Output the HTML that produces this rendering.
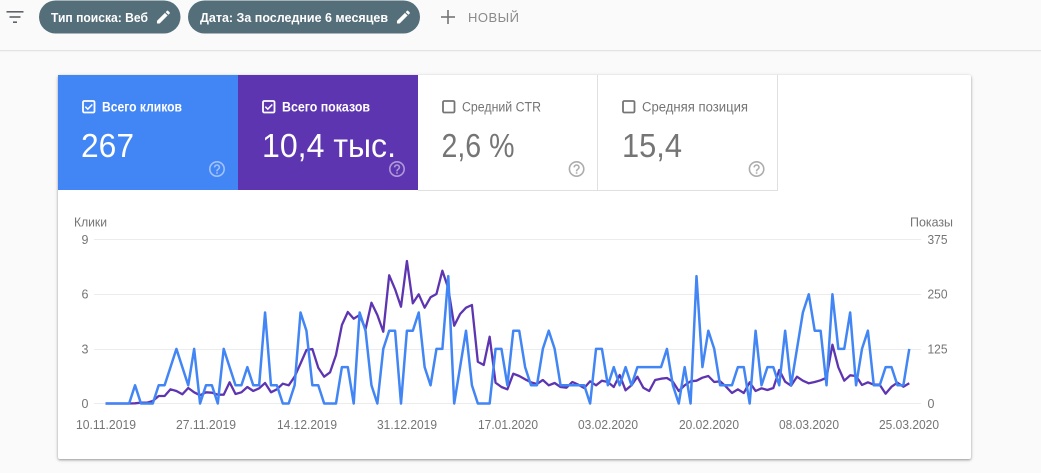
<!DOCTYPE html>
<html lang="ru"><head><meta charset="utf-8"><title>Search Console</title>
<style>
html,body{margin:0;padding:0;width:1041px;height:473px;overflow:hidden;background:#fafafa}
#bar{position:absolute;left:0;top:0;width:1041px;height:50px;border-bottom:1px solid #e3e3e3;box-sizing:content-box;box-shadow:0 1px 1px rgba(0,0,0,.03)}
#card{position:absolute;left:58px;top:75px;width:913px;height:384px;background:#fff;border-radius:2px;box-shadow:0 1px 2px rgba(0,0,0,.3),0 1px 4px rgba(0,0,0,.15)}
svg{position:absolute;left:0;top:0}
text{font-family:"Liberation Sans",sans-serif}
.ax{font-size:12.5px;fill:#757575}
.lb{font-size:13.5px;font-weight:bold;fill:#fff}
.lg{font-size:13.5px;fill:#757575}
.n{font-size:33px;fill:#fff}
.ng{font-size:33px;fill:#757575}
.c{font-size:13px;font-weight:bold;fill:#fff}
.g{stroke:#ececec;stroke-width:1}
</style></head><body>
<div id="bar"></div>
<div id="card"></div>
<svg width="1041" height="473" viewBox="0 0 1041 473" xmlns="http://www.w3.org/2000/svg">
<!-- filter -->
<g fill="#5f6368"><rect x="6.5" y="11" width="17" height="1.6"/><rect x="9.5" y="16.2" width="11" height="1.6"/><rect x="13" y="21.4" width="4" height="1.6"/></g>
<!-- chips -->
<rect x="39" y="0.5" width="141.5" height="33" rx="16.5" fill="#546e7a"/>
<text class="c" x="51" y="22" textLength="97" lengthAdjust="spacingAndGlyphs">Тип поиска: Веб</text>
<path transform="translate(154.8,8.4) scale(.72)" fill="#fff" d="M3 17.25V21h3.75L17.81 9.94l-3.75-3.75L3 17.25zM20.71 7.04a1 1 0 0 0 0-1.41l-2.34-2.34a1 1 0 0 0-1.41 0l-1.83 1.83 3.75 3.75 1.83-1.83z"/>
<rect x="188" y="0.5" width="232" height="33" rx="16.5" fill="#546e7a"/>
<text class="c" x="200" y="22" textLength="188" lengthAdjust="spacingAndGlyphs">Дата: За последние 6 месяцев</text>
<path transform="translate(394.8,8.4) scale(.72)" fill="#fff" d="M3 17.25V21h3.75L17.81 9.94l-3.75-3.75L3 17.25zM20.71 7.04a1 1 0 0 0 0-1.41l-2.34-2.34a1 1 0 0 0-1.41 0l-1.83 1.83 3.75 3.75 1.83-1.83z"/>
<!-- new -->
<g fill="#757575"><rect x="441" y="16.2" width="14" height="1.6"/><rect x="447.2" y="10" width="1.6" height="14"/></g>
<text x="468" y="22" font-size="13" fill="#8a8a8a" textLength="51" lengthAdjust="spacing">НОВЫЙ</text>

<!-- tiles -->
<rect x="58" y="75" width="180" height="115" fill="#4285f4"/>
<rect x="238" y="75" width="180" height="115" fill="#5e35b1"/>
<path d="M418 190.5H778M597.5 75V190M777.5 75V190" stroke="#e0e0e0" fill="none"/>

<rect x="83" y="101" width="11.5" height="11.5" rx="1.2" fill="none" stroke="#fff" stroke-width="1.8"/>
<path d="M85.3 106.7l2.5 2.5 4.5-4.7" fill="none" stroke="#fff" stroke-width="1.5"/>
<text class="lb" x="102" y="111.5" textLength="80" lengthAdjust="spacingAndGlyphs">Всего кликов</text>
<text class="n" x="81" y="157" textLength="53" lengthAdjust="spacingAndGlyphs">267</text>

<rect x="263" y="101" width="11.5" height="11.5" rx="1.2" fill="none" stroke="#fff" stroke-width="1.8"/>
<path d="M265.3 106.7l2.5 2.5 4.5-4.7" fill="none" stroke="#fff" stroke-width="1.5"/>
<text class="lb" x="282" y="111.5" textLength="88" lengthAdjust="spacingAndGlyphs">Всего показов</text>
<text class="n" x="262" y="157" textLength="134" lengthAdjust="spacingAndGlyphs">10,4 тыс.</text>

<rect x="443" y="101" width="11.5" height="11.5" rx="1.2" fill="none" stroke="#757575" stroke-width="1.8"/>
<text class="lg" x="462" y="111.5" textLength="79" lengthAdjust="spacingAndGlyphs">Средний CTR</text>
<text class="ng" x="441.5" y="157" textLength="73" lengthAdjust="spacingAndGlyphs">2,6 %</text>

<rect x="623" y="101" width="11.5" height="11.5" rx="1.2" fill="none" stroke="#757575" stroke-width="1.8"/>
<text class="lg" x="642" y="111.5" textLength="106" lengthAdjust="spacingAndGlyphs">Средняя позиция</text>
<text class="ng" x="622" y="157" textLength="60" lengthAdjust="spacingAndGlyphs">15,4</text>

<!-- help icons -->
<g fill="#fff" fill-opacity=".5">
<path transform="translate(207.4,159.4) scale(.8)" d="M11 18h2v-2h-2v2zm1-16C6.48 2 2 6.48 2 12s4.48 10 10 10 10-4.48 10-10S17.52 2 12 2zm0 18c-4.41 0-8-3.59-8-8s3.59-8 8-8 8 3.59 8 8-3.59 8-8 8zm0-14c-2.21 0-4 1.79-4 4h2c0-1.1.9-2 2-2s2 .9 2 2c0 2-3 1.75-3 5h2c0-2.25 3-2.5 3-5 0-2.21-1.79-4-4-4z"/>
<path transform="translate(387.4,159.4) scale(.8)" d="M11 18h2v-2h-2v2zm1-16C6.48 2 2 6.48 2 12s4.48 10 10 10 10-4.48 10-10S17.52 2 12 2zm0 18c-4.41 0-8-3.59-8-8s3.59-8 8-8 8 3.59 8 8-3.59 8-8 8zm0-14c-2.21 0-4 1.79-4 4h2c0-1.1.9-2 2-2s2 .9 2 2c0 2-3 1.75-3 5h2c0-2.25 3-2.5 3-5 0-2.21-1.79-4-4-4z"/>
</g>
<g fill="#adadad">
<path transform="translate(567,159.4) scale(.8)" d="M11 18h2v-2h-2v2zm1-16C6.48 2 2 6.48 2 12s4.48 10 10 10 10-4.48 10-10S17.52 2 12 2zm0 18c-4.41 0-8-3.59-8-8s3.59-8 8-8 8 3.59 8 8-3.59 8-8 8zm0-14c-2.21 0-4 1.79-4 4h2c0-1.1.9-2 2-2s2 .9 2 2c0 2-3 1.75-3 5h2c0-2.25 3-2.5 3-5 0-2.21-1.79-4-4-4z"/>
<path transform="translate(747,159.4) scale(.8)" d="M11 18h2v-2h-2v2zm1-16C6.48 2 2 6.48 2 12s4.48 10 10 10 10-4.48 10-10S17.52 2 12 2zm0 18c-4.41 0-8-3.59-8-8s3.59-8 8-8 8 3.59 8 8-3.59 8-8 8zm0-14c-2.21 0-4 1.79-4 4h2c0-1.1.9-2 2-2s2 .9 2 2c0 2-3 1.75-3 5h2c0-2.25 3-2.5 3-5 0-2.21-1.79-4-4-4z"/>
</g>

<!-- chart grid -->
<path class="g" d="M94 239.5H921M94 294.5H921M94 349.5H921M94 403.5H921" fill="none"/>
<text class="ax" x="74" y="226.7" textLength="33" lengthAdjust="spacingAndGlyphs">Клики</text>
<text class="ax" x="910" y="226.7" textLength="43" lengthAdjust="spacingAndGlyphs">Показы</text>
<g class="ax" text-anchor="end">
<text x="88.5" y="244">9</text><text x="88.5" y="298.5">6</text><text x="88.5" y="353.5">3</text><text x="88.5" y="408">0</text>
</g>
<g class="ax">
<text x="927.5" y="244" textLength="20" lengthAdjust="spacingAndGlyphs">375</text>
<text x="927.5" y="298.5" textLength="20" lengthAdjust="spacingAndGlyphs">250</text>
<text x="927.5" y="353.5" textLength="20" lengthAdjust="spacingAndGlyphs">125</text>
<text x="927.5" y="408">0</text>
</g>
<g class="ax">
<text x="76" y="429" textLength="60" lengthAdjust="spacingAndGlyphs">10.11.2019</text>
<text x="176" y="429" textLength="60" lengthAdjust="spacingAndGlyphs">27.11.2019</text>
<text x="277" y="429" textLength="60" lengthAdjust="spacingAndGlyphs">14.12.2019</text>
<text x="377" y="429" textLength="60" lengthAdjust="spacingAndGlyphs">31.12.2019</text>
<text x="478" y="429" textLength="60" lengthAdjust="spacingAndGlyphs">17.01.2020</text>
<text x="578" y="429" textLength="60" lengthAdjust="spacingAndGlyphs">03.02.2020</text>
<text x="679" y="429" textLength="60" lengthAdjust="spacingAndGlyphs">20.02.2020</text>
<text x="779" y="429" textLength="60" lengthAdjust="spacingAndGlyphs">08.03.2020</text>
<text x="879" y="429" textLength="60" lengthAdjust="spacingAndGlyphs">25.03.2020</text>
</g>

<!-- purple line: x = day index, y = screen px -->
<polyline transform="translate(105.5,0) scale(5.91,1)" fill="none" stroke="#5e35b1" stroke-width="2.3" stroke-linejoin="round" vector-effect="non-scaling-stroke" style="vector-effect:non-scaling-stroke" points="0,403.5 1,403.5 2,403.5 3,403.5 4,403.5 5,403.3 6,402.7 7,402.7 8,401 9,396 10,396 11,389.3 12,391 13,394.3 14,388 15,392.3 16,395.3 17,392.3 18,392.7 19,394.7 20,394.7 21,382.3 22,394 23,392.3 24,387 25,391 26,388.3 27,383 28,392.3 29,389.3 30,383.7 31,385.3 32,376.7 33,363.5 34,350 35,349 36,367.7 37,376.7 38,372.3 39,355 40,325 41,312 42,318.7 43,315 44,329.3 45,302.7 46,315 47,331.7 48,275.3 49,289.3 50,306.7 51,261 52,303.3 53,294.3 54,307.7 55,297.3 56,294 57,270.7 58,288.3 59,325.7 60,314 61,307.7 62,305 63,361.7 64,365 65,336.7 66,382.7 67,387 68,389.3 69,373.7 70,376 71,379.3 72,382.3 73,384 74,380 75,385.3 76,383 77,387 78,387.7 79,382 80,384.7 81,388 82,381.3 83,385.3 84,380.7 85,382 86,387 87,375 88,390.3 89,385.3 90,376.7 91,387.7 92,391 93,380 94,378.7 95,378 96,381.7 97,391 98,385.3 99,381.3 100,380.7 101,377.7 102,376 103,382 104,381.3 105,386.7 106,393 107,389.3 108,393 109,382.3 110,391 111,388.3 112,390 113,388 114,370 115,381.7 116,385.7 117,376.7 118,380.7 119,383.3 120,382 121,380.3 122,377.7 123,344.7 124,367.3 125,380.7 126,375.3 127,376 128,385 129,382.3 130,384.7 131,384.7 132,393.7 133,386.7 134,382.7 135,386.7 136,383.3"/>
<!-- blue line: x = day index, y = clicks -->
<polyline transform="translate(105.5,403.5) scale(5.91,-18.2)" fill="none" stroke="#4285f4" stroke-width="2.5" stroke-linejoin="round" vector-effect="non-scaling-stroke" style="vector-effect:non-scaling-stroke" points="0,0 1,0 2,0 3,0 4,0 5,1 6,0 7,0 8,0 9,1 10,1 11,2 12,3 13,2 14,1 15,3 16,0 17,1 18,1 19,0 20,3 21,2 22,1 23,1 24,2 25,1 26,1 27,5 28,1 29,1 30,0 31,0 32,1 33,5 34,4 35,1 36,1 37,0 38,0 39,0 40,2 41,2 42,0 43,5 44,4 45,1 46,0 47,3 48,4 49,4 50,0 51,4 52,4 53,5 54,2 55,1 56,3 57,3 58,7 59,0 60,2 61,4 62,1 63,0 64,0 65,0 66,3 67,3 68,1 69,4 70,4 71,2 72,1 73,1 74,3 75,4 76,3 77,1 78,1 79,1 80,1 81,1 82,0 83,3 84,3 85,1 86,2 87,1 88,2 89,1 90,2 91,2 92,2 93,2 94,2 95,3 96,1 97,0 98,2 99,0 100,7 101,2 102,4 103,3 104,1 105,1 106,1 107,2 108,2 109,0 110,4 111,1 112,2 113,2 114,1 115,4 116,1 117,3 118,5 119,6 120,4 121,4 122,1 123,6 124,3 125,3 126,5 127,1 128,3 129,4 130,1 131,1 132,2 133,2 134,1 135,1 136,3"/>
</svg>
</body></html>
